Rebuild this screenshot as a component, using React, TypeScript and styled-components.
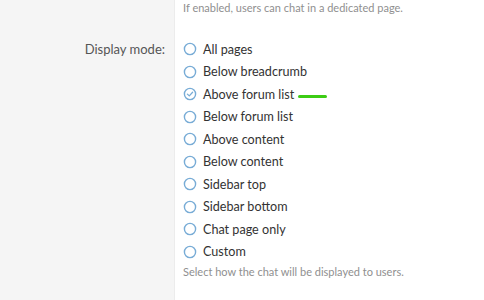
import styled, { createGlobalStyle } from 'styled-components'

const GlobalStyle = createGlobalStyle`
  html, body {
    margin: 0;
    padding: 0;
    background: #fff;
  }
  body {
    font-family: Lato, "Liberation Sans", sans-serif;
  }
`

const options = [
  'All pages',
  'Below breadcrumb',
  'Above forum list',
  'Below forum list',
  'Above content',
  'Below content',
  'Sidebar top',
  'Sidebar bottom',
  'Chat page only',
  'Custom',
]

function Radio({ checked }: { checked: boolean }) {
  return (
    <RadioIcon viewBox="0 0 14 14">
      <circle cx="7" cy="7" r="5.6" fill="none" stroke="#78acd6" strokeWidth="1.4" />
      {checked && (
        <path d="M4.4 7.1 L6.3 8.9 L9.6 5.3" fill="none" stroke="#78acd6" strokeWidth="1.3" strokeLinecap="round" strokeLinejoin="round" />
      )}
    </RadioIcon>
  )
}

export default function App() {
  return (
    <>
      <GlobalStyle />
      <Form>
        <Row>
          <Label />
          <Content>
            <Hint>If enabled, users can chat in a dedicated page.</Hint>
          </Content>
        </Row>
        <Row $gap={22}>
          <Label>Display mode:</Label>
          <Content>
            <List>
              {options.map((o, i) => (
                <Option key={o}>
                  <Radio checked={i === 2} />
                  <span>{o}</span>
                  {i === 2 && <Mark />}
                </Option>
              ))}
            </List>
            <Hint>Select how the chat will be displayed to users.</Hint>
          </Content>
        </Row>
        <Row>
          <Label />
          <Content />
        </Row>
      </Form>
    </>
  )
}

const Form = styled.div`
  display: flex;
  flex-direction: column;
  height: 300px;
  overflow: hidden;
`

const Row = styled.div<{ $gap?: number }>`
  display: grid;
  grid-template-columns: 175px 1fr;
  & > div {
    padding-top: ${(p) => p.$gap ?? 0}px;
  }
  &:last-child {
    flex: 1;
  }
`

const Label = styled.div`
  background: #f5f5f5;
  border-right: 1px solid #ececec;
  text-align: right;
  padding-right: 9px;
  font-size: 13px;
  line-height: 22.5px;
  color: #555;
`

const Content = styled.div`
  padding-left: 8px;
`

const Hint = styled.div`
  font-size: 11px;
  color: #8f8f8f;
  line-height: 16px;
`

const List = styled.div`
  display: flex;
  flex-direction: column;
  margin-bottom: 1px;
`

const Option = styled.label`
  display: flex;
  align-items: center;
  gap: 6px;
  height: 22.5px;
  font-size: 12.6px;
  color: #333;
`

const RadioIcon = styled.svg`
  width: 14px;
  height: 14px;
  flex: none;
`

const Mark = styled.span`
  width: 29px;
  height: 3px;
  border-radius: 2px;
  background: #3ccc14;
  margin: 5px 0 0 -2px;
`
